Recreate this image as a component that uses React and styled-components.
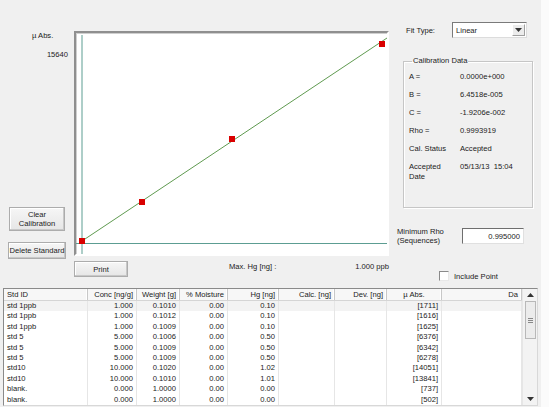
import React from "react";
import styled, { createGlobalStyle, css } from "styled-components";

const GlobalStyle = createGlobalStyle`
  html, body {
    margin: 0;
    padding: 0;
    background: #fbfbfb;
  }
  body {
    font-family: "Liberation Sans", Arial, sans-serif;
    font-size: 7.6px;
    color: #1a1a1a;
  }
`;

const Window = styled.div`
  width: 541px;
  height: 407px;
  overflow: hidden;
  background: #f0f0f0;
  display: flex;
  flex-direction: column;
`;

const TopArea = styled.div`
  display: grid;
  grid-template-columns: 74px 315px 1fr;
  height: 288px;
`;

const LeftCol = styled.div`
  display: flex;
  flex-direction: column;
  padding: 31px 0 29px 8px;
`;

const AxisUnit = styled.div`
  padding-left: 24px;
  line-height: 10px;
`;

const AxisMax = styled.div`
  text-align: right;
  padding-right: 6px;
  margin-top: 9px;
  line-height: 10px;
`;

const Button = styled.button`
  font-family: inherit;
  font-size: 7.6px;
  color: #1a1a1a;
  background: linear-gradient(#f6f6f6, #e6e6e6);
  border: 1px solid #acacac;
  box-shadow: inset -1px -1px 0 #c8c8c8, inset 1px 1px 0 #fff;
  padding: 0;
  line-height: 9px;
  white-space: nowrap;
  ${(p) =>
    ({
      tall: css`
        width: 56px;
        height: 24px;
        margin-left: 1px;
      `,
      wide: css`
        width: 58px;
        height: 17px;
      `,
      print: css`
        width: 54px;
        height: 16px;
      `,
    }[p.size])}
`;

const LeftButtons = styled.div`
  margin-top: auto;
  display: flex;
  flex-direction: column;
  gap: 11px;
`;

const CenterCol = styled.div`
  padding-top: 31px;
  display: flex;
  flex-direction: column;
`;

const ChartBox = styled.div`
  height: 225px;
  box-sizing: border-box;
  background: #fff;
  border-top: 2px solid #8f8f8f;
  border-left: 2px solid #8f8f8f;
  border-right: 2px solid #fff;
  border-bottom: 2px solid #fff;
  box-shadow: inset 1px 1px 0 #cfcfcf;
`;

const PrintRow = styled.div`
  display: flex;
  align-items: center;
  margin-top: 5px;
`;

const MaxLabel = styled.span`
  margin-left: 101px;
  margin-top: -5px;
`;

const MaxValue = styled.span`
  margin-left: auto;
  margin-top: -5px;
`;

const RightCol = styled.div`
  padding: 22px 0 0 8px;
  display: flex;
  flex-direction: column;
`;

const FitRow = styled.div`
  display: flex;
  align-items: center;
  padding-left: 9px;
`;

const FitLabel = styled.span`
  width: 46px;
`;

const Select = styled.div`
  width: 75px;
  height: 16px;
  box-sizing: border-box;
  background: #fff;
  border: 1px solid #7a7a7a;
  border-right-color: #dcdcdc;
  border-bottom-color: #dcdcdc;
  display: flex;
  align-items: center;
  justify-content: space-between;
  padding-left: 3px;
`;

const SelectArrow = styled.div`
  width: 13px;
  height: 12px;
  margin-right: 1px;
  background: #ececec;
  border: 1px solid #a0a0a0;
  border-top-color: #fff;
  border-left-color: #fff;
  box-sizing: border-box;
  display: flex;
  align-items: center;
  justify-content: center;
`;

const Group = styled.fieldset`
  margin: 18px 0 0 6px;
  width: 130px;
  height: 152px;
  box-sizing: border-box;
  border: 1px solid #c6c6c6;
  box-shadow: 1px 1px 0 #fff, inset 1px 1px 0 #fff;
  padding: 6px 0 0 5px;
  display: grid;
  grid-template-columns: 51px 1fr;
  grid-auto-rows: min-content;
  row-gap: 8px;
  align-content: start;
  legend {
    padding: 0 1px;
    margin-left: 3px;
    line-height: 10px;
  }
`;

const Cell = styled.div`
  line-height: 10px;
`;

const RhoRow = styled.div`
  display: flex;
  align-items: center;
  margin-top: 19px;
`;

const RhoLabel = styled.div`
  width: 65px;
  line-height: 9px;
`;

const RhoInput = styled.div`
  width: 62px;
  height: 16px;
  box-sizing: border-box;
  background: #fff;
  border: 1px solid #6e6e6e;
  border-right-color: #e0e0e0;
  border-bottom-color: #e0e0e0;
  text-align: right;
  padding: 3px 3px 0 0;
  line-height: 9px;
`;

const CheckRow = styled.label`
  display: flex;
  align-items: center;
  gap: 5px;
  margin: 26px 0 0 42px;
`;

const CheckBox = styled.span`
  width: 8px;
  height: 8px;
  background: #fff;
  border: 1px solid #8a8a8a;
  border-right-color: #e8e8e8;
  border-bottom-color: #e8e8e8;
`;

const TableWrap = styled.div`
  margin-left: 3px;
  width: 535px;
  height: 118px;
  box-sizing: border-box;
  border: 1px solid #8a8a8a;
  border-right-color: #d8d8d8;
  border-bottom-color: #d8d8d8;
  background: #fff;
  display: flex;
`;

const List = styled.div`
  flex: 1;
  overflow: hidden;
`;

const cols = "84px 49px 43px 48px 51px 56px 52px 55px 1fr";

const HeaderRow = styled.div`
  display: grid;
  grid-template-columns: ${cols};
  height: 11px;
  background: #f7f7f7;
  border-bottom: 1px solid #d5d5d5;
`;

const HeadCell = styled.div`
  line-height: 11px;
  padding: 0 3px;
  border-right: 1px solid #c8c8c8;
  box-shadow: inset -1px 0 0 #fff;
  text-align: ${(p) => p.align || "right"};
  white-space: nowrap;
  overflow: hidden;
`;

const Row = styled.div`
  display: grid;
  grid-template-columns: ${cols};
  height: 10.4px;
  background: ${(p) => (p.selected ? "#f3f3f3" : "#fff")};
`;

const DataCell = styled.div`
  line-height: 10.4px;
  padding: 0 3px;
  text-align: ${(p) => (p.left ? "left" : "right")};
  border-right: 1px solid #e6e6e6;
  white-space: nowrap;
`;

const ScrollBar = styled.div`
  width: 14px;
  background: #f3f3f3;
  border-left: 1px solid #e6e6e6;
  display: flex;
  flex-direction: column;
  align-items: center;
`;

const ScrollArrow = styled.div`
  height: 12px;
  width: 100%;
  display: flex;
  align-items: center;
  justify-content: center;
`;

const Thumb = styled.div`
  width: 11px;
  height: 38px;
  box-sizing: border-box;
  background: #ececec;
  border: 1px solid #b8b8b8;
  display: flex;
  align-items: center;
  justify-content: center;
`;

const Grip = styled.div`
  width: 5px;
  height: 5px;
  background: repeating-linear-gradient(#888 0 1px, transparent 1px 2px);
`;

const rows = [
  ["std 1ppb", "1.000", "0.1010", "0.00", "0.10", "[1711]"],
  ["std 1ppb", "1.000", "0.1012", "0.00", "0.10", "[1616]"],
  ["std 1ppb", "1.000", "0.1009", "0.00", "0.10", "[1625]"],
  ["std 5", "5.000", "0.1006", "0.00", "0.50", "[6376]"],
  ["std 5", "5.000", "0.1009", "0.00", "0.50", "[6342]"],
  ["std 5", "5.000", "0.1009", "0.00", "0.50", "[6278]"],
  ["std10", "10.000", "0.1020", "0.00", "1.02", "[14051]"],
  ["std10", "10.000", "0.1010", "0.00", "1.01", "[13841]"],
  ["blank.", "0.000", "1.0000", "0.00", "0.00", "[737]"],
  ["blank.", "0.000", "1.0000", "0.00", "0.00", "[502]"],
];

// points on the calibration line, in chart pixels
const points = [
  [6, 208],
  [66, 169],
  [156, 106],
  [306, 11],
];

const Chart = () => (
  <svg width="311" height="221" viewBox="0 0 311 221" style={{ display: "block" }}>
    <line x1="6" y1="2" x2="6" y2="221" stroke="#5c9d92" strokeWidth="1" />
    <line x1="0" y1="210.5" x2="311" y2="210.5" stroke="#5c9d92" strokeWidth="1" />
    <line x1="6" y1="208" x2="311" y2="5" stroke="#5f9a50" strokeWidth="1" />
    {points.map(([x, y]) => (
      <rect key={x} x={x - 3} y={y - 3} width="6" height="6" fill="#d90000" />
    ))}
  </svg>
);

const Triangle = ({ up }) => (
  <svg width="7" height="4" viewBox="0 0 7 4">
    <path d={up ? "M0 4 L3.5 0 L7 4 Z" : "M0 0 L7 0 L3.5 4 Z"} fill="#333" />
  </svg>
);

const App = () => {
  return (
    <Window>
      <GlobalStyle />
      <TopArea>
        <LeftCol>
          <AxisUnit>µ Abs.</AxisUnit>
          <AxisMax>15640</AxisMax>
          <LeftButtons>
            <Button size="tall">
              Clear
              <br />
              Calibration
            </Button>
            <Button size="wide">Delete Standard</Button>
          </LeftButtons>
        </LeftCol>
        <CenterCol>
          <ChartBox>
            <Chart />
          </ChartBox>
          <PrintRow>
            <Button size="print">Print</Button>
            <MaxLabel>Max. Hg [ng] :</MaxLabel>
            <MaxValue>1.000 ppb</MaxValue>
          </PrintRow>
        </CenterCol>
        <RightCol>
          <FitRow>
            <FitLabel>Fit Type:</FitLabel>
            <Select>
              Linear
              <SelectArrow>
                <Triangle />
              </SelectArrow>
            </Select>
          </FitRow>
          <Group>
            <legend>Calibration Data</legend>
            <Cell>A =</Cell>
            <Cell>0.0000e+000</Cell>
            <Cell>B =</Cell>
            <Cell>6.4518e-005</Cell>
            <Cell>C =</Cell>
            <Cell>-1.9206e-002</Cell>
            <Cell>Rho =</Cell>
            <Cell>0.9993919</Cell>
            <Cell>Cal. Status</Cell>
            <Cell>Accepted</Cell>
            <Cell>
              Accepted
              <br />
              Date
            </Cell>
            <Cell>05/13/13&nbsp;&nbsp;15:04</Cell>
          </Group>
          <RhoRow>
            <RhoLabel>
              Minimum Rho
              <br />
              (Sequences)
            </RhoLabel>
            <RhoInput>0.995000</RhoInput>
          </RhoRow>
          <CheckRow>
            <CheckBox />
            Include Point
          </CheckRow>
        </RightCol>
      </TopArea>
      <TableWrap>
        <List>
          <HeaderRow>
            <HeadCell align="left">Std ID</HeadCell>
            <HeadCell>Conc [ng/g]</HeadCell>
            <HeadCell>Weight [g]</HeadCell>
            <HeadCell>% Moisture</HeadCell>
            <HeadCell>Hg [ng]</HeadCell>
            <HeadCell>Calc. [ng]</HeadCell>
            <HeadCell>Dev. [ng]</HeadCell>
            <HeadCell align="center">µ Abs.</HeadCell>
            <HeadCell>Da</HeadCell>
          </HeaderRow>
          {rows.map((r, i) => (
            <Row key={i} selected={i === 0}>
              <DataCell left>{r[0]}</DataCell>
              <DataCell>{r[1]}</DataCell>
              <DataCell>{r[2]}</DataCell>
              <DataCell>{r[3]}</DataCell>
              <DataCell>{r[4]}</DataCell>
              <DataCell />
              <DataCell />
              <DataCell>{r[5]}</DataCell>
              <DataCell />
            </Row>
          ))}
        </List>
        <ScrollBar>
          <ScrollArrow>
            <Triangle up />
          </ScrollArrow>
          <Thumb>
            <Grip />
          </Thumb>
          <ScrollArrow style={{ marginTop: "auto" }}>
            <Triangle />
          </ScrollArrow>
        </ScrollBar>
      </TableWrap>
    </Window>
  );
};

export default App;
